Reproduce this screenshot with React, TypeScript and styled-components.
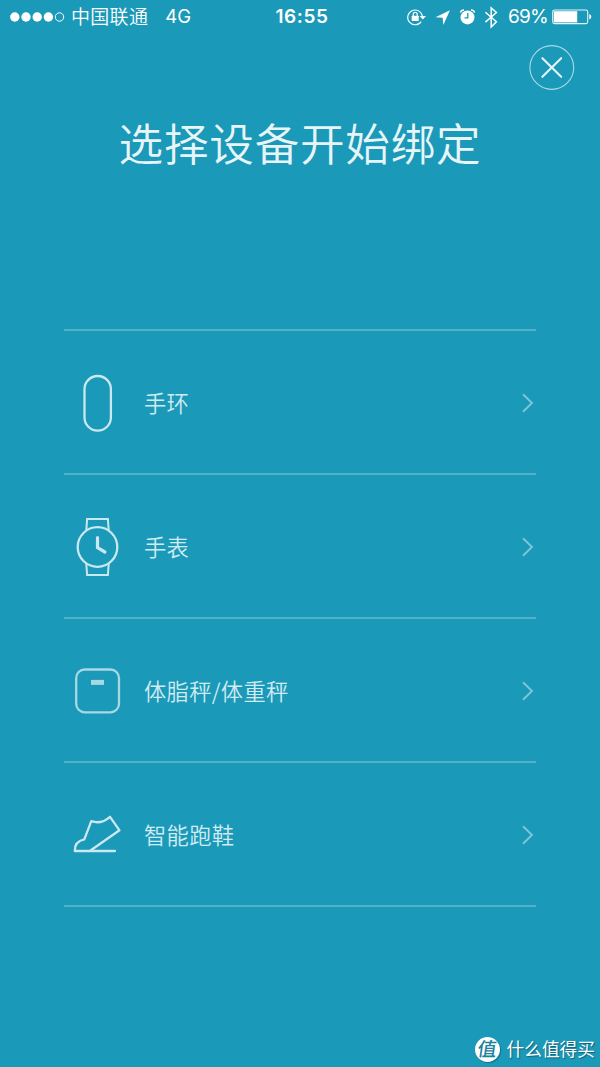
import React from 'react';
import styled, { createGlobalStyle } from 'styled-components';

const GlobalStyle = createGlobalStyle`
  * { box-sizing: border-box; }
  body { margin: 0; background: #1a99b9; }
`;

const Screen = styled.main`
  width: 600px;
  height: 1067px;
  display: flex;
  flex-direction: column;
  overflow: hidden;
  background: #1a99b9;
  color: #fff;
  font-family: Inter, 'Noto Sans CJK SC', sans-serif;
`;

const StatusBar = styled.header`
  height: 33px;
  display: grid;
  grid-template-columns: 1fr auto 1fr;
  align-items: center;
  padding: 0 8px 0 10px;
  font-size: 19px;
  line-height: 33px;
`;

const StatusGroup = styled.div<{ $end?: boolean }>`
  display: flex;
  align-items: center;
  justify-content: ${(p) => (p.$end ? 'flex-end' : 'flex-start')};
  white-space: nowrap;
  svg { display: block; flex: none; }
`;

const Carrier = styled.span`
  margin: -2px 0 0 6px;
  font-family: 'Noto Sans CJK SC', sans-serif;
  font-weight: 350;
  font-size: 19px;
  letter-spacing: 0.3px;
`;

const Network = styled.span`
  margin-left: 17px;
  font-size: 18.5px;
  font-weight: 400;
`;

const Clock = styled.time`
  padding-left: 2px;
  font-size: 19px;
  font-weight: 600;
  letter-spacing: 0.6px;
`;

const Percent = styled.span`
  margin: 0 4px 0 10px;
  font-size: 19px;
  font-weight: 400;
  letter-spacing: -0.7px;
`;

const TopActions = styled.div`
  display: flex;
  justify-content: flex-end;
  padding: 11px 25px 0 0;
`;

const CloseButton = styled.button`
  width: 46px;
  height: 46px;
  padding: 0;
  border: 0;
  background: none;
  color: #e8f5f8;
  svg { display: block; }
`;

const Title = styled.h1`
  margin: 19px 0 0;
  height: 66px;
  text-align: center;
  font-family: 'Noto Sans CJK SC', sans-serif;
  font-size: 44.6px;
  line-height: 66px;
  font-weight: 350;
  letter-spacing: 0.75px;
  color: #e8f5f8;
`;

const DeviceList = styled.ul`
  list-style: none;
  margin: 154px 64px 0;
  padding: 0;
  border-top: 2px solid #52b2ca;
`;

const DeviceRow = styled.li`
  height: 144px;
  display: flex;
  align-items: center;
  border-bottom: 2px solid #52b2ca;
  padding: 2px 1px 0 8px;
  svg { display: block; flex: none; }
`;

const DeviceName = styled.span`
  flex: 1;
  margin: -2px 0 0 22px;
  font-family: 'Noto Sans CJK SC', sans-serif;
  font-size: 22.3px;
  line-height: 32px;
  font-weight: 350;
  letter-spacing: 0.3px;
  color: #d1ebf1;
`;

const Watermark = styled.footer`
  margin-top: auto;
  display: flex;
  align-items: center;
  justify-content: flex-end;
  gap: 7px;
  padding: 0 5px 5px 0;
  font-family: 'Noto Sans CJK SC', sans-serif;
  font-size: 17.7px;
  line-height: 26px;
  font-weight: 400;
  text-shadow: 1px 1px 1px rgba(0, 55, 75, 0.55);
`;

const WatermarkText = styled.span`
  margin-top: -3px;
`;

const Seal = styled.span`
  width: 25px;
  height: 25px;
  border-radius: 50%;
  background: #fff;
  color: #1b819d;
  font-size: 19px;
  font-weight: 500;
  line-height: 22px;
  text-align: center;
  text-shadow: none;
  box-shadow: 1px 1px 1px rgba(0, 55, 75, 0.4);
`;

const SealGlyph = styled.span`
  display: block;
  transform: skewX(-8deg);
`;

const Signal = () => (
  <svg width="55" height="12" viewBox="0 0 55 12">
    {[4.8, 16, 27.2, 38.4].map((x) => (
      <circle key={x} cx={x} cy="6" r="4.7" fill="#fff" />
    ))}
    <circle cx="49.5" cy="6" r="4.2" fill="none" stroke="#fff" strokeWidth="1" />
  </svg>
);

const StatusIcons = () => (
  <svg width="92" height="24" viewBox="406 4 92 24" fill="none" stroke="#fff">
    <path d="M421.2 20.6A7.4 7.4 0 1 1 422.4 15.2" strokeWidth="1.1" />
    <path d="M419.6 15h6.4l-3.2 3.4z" fill="#fff" stroke="none" />
    <rect x="411.7" y="14.8" width="7" height="5.2" rx=".5" fill="#fff" stroke="none" />
    <path d="M413.2 15v-1.7a2 2 0 0 1 4 0V15" strokeWidth="1.2" />
    <path d="M450 9.2 443.3 24l-.6-7.2-7.2-.5z" fill="#fff" stroke="none" />
    <circle cx="467.5" cy="16.4" r="7" fill="#fff" stroke="none" />
    <path d="M460.5 11.6q.3-2.6 3.5-2.6M474.5 11.6q-.3-2.6-3.5-2.6" strokeWidth="1.3" />
    <path d="M467.8 12v4.8h-3.3" stroke="#1a99b9" strokeWidth="1.3" />
    <path d="m485.4 11.2 11 9.6-5.2 5.2V7l5.2 4.5-11 9.6" strokeWidth="1.5" />
  </svg>
);

const Battery = () => (
  <svg width="40" height="18" viewBox="0 0 40 18">
    <rect x=".7" y="2" width="35" height="13.6" rx="1.8" fill="none" stroke="#e5f4f7" strokeWidth="1.1" />
    <rect x="1.8" y="3.2" width="23.4" height="11.2" fill="#fff" />
    <path d="M37.3 6q2 .7 2 2.8t-2 2.8z" fill="#fff" />
  </svg>
);

const CloseIcon = () => (
  <svg width="46" height="46" viewBox="0 0 46 46" fill="none" stroke="currentColor">
    <circle cx="22.8" cy="23.5" r="21.9" strokeWidth="1.1" opacity=".7" />
    <path d="m13.4 14.2 18.8 18.6M32.2 14.2 13.4 32.8" strokeWidth="2.1" strokeLinecap="round" />
  </svg>
);

const BandIcon = () => (
  <rect x="20.5" y="4" width="26.4" height="54.6" rx="13.2" />
);

const WatchIcon = () => (
  <>
    <circle cx="33.5" cy="31" r="19.8" />
    <path d="m22.3 14.2.8-11.2h20.8l.8 11.2M22.3 47.8l.8 11.2h20.8l.8-11.2" strokeWidth="2" />
    <path d="M33.5 21.7v9.9l7.4 4.4" strokeWidth="3.2" strokeLinecap="round" />
  </>
);

const ScaleIcon = () => (
  <g stroke="#a8d8e4">
    <rect x="12.2" y="9.5" width="42.8" height="42.8" rx="8.5" />
    <path d="M27 22.4h13" strokeWidth="5" />
  </g>
);

const ShoeIcon = () => (
  <path
    d="M51 47H10.8q-.4-9.5 9.5-11.6l7-18.2q10 3.5 18.7-4.4l9.5 13.5L26.5 46.5"
    strokeLinejoin="round"
    strokeLinecap="round"
  />
);

const Chevron = () => (
  <svg width="14" height="20" viewBox="0 0 14 20" fill="none" stroke="#7fc5d8" strokeWidth="1.9">
    <path d="m2 1.3 9 8.7-9 8.7" />
  </svg>
);

const devices = [
  { name: '手环', icon: <BandIcon /> },
  { name: '手表', icon: <WatchIcon /> },
  { name: '体脂秤/体重秤', icon: <ScaleIcon /> },
  { name: '智能跑鞋', icon: <ShoeIcon /> },
];

const DeviceIcon = ({ children }: { children: React.ReactNode }) => (
  <svg width="50" height="62" viewBox="8 0 50 62" fill="none" stroke="#cae8ef" strokeWidth="2.3">
    {children}
  </svg>
);

export default function App() {
  return (
    <Screen>
      <GlobalStyle />
      <StatusBar>
        <StatusGroup>
          <Signal />
          <Carrier>中国联通</Carrier>
          <Network>4G</Network>
        </StatusGroup>
        <Clock>16:55</Clock>
        <StatusGroup $end>
          <StatusIcons />
          <Percent>69%</Percent>
          <Battery />
        </StatusGroup>
      </StatusBar>
      <TopActions>
        <CloseButton aria-label="关闭">
          <CloseIcon />
        </CloseButton>
      </TopActions>
      <Title>选择设备开始绑定</Title>
      <DeviceList>
        {devices.map((device) => (
          <DeviceRow key={device.name}>
            <DeviceIcon>{device.icon}</DeviceIcon>
            <DeviceName>{device.name}</DeviceName>
            <Chevron />
          </DeviceRow>
        ))}
      </DeviceList>
      <Watermark>
        <Seal>
          <SealGlyph>值</SealGlyph>
        </Seal>
        <WatermarkText>什么值得买</WatermarkText>
      </Watermark>
    </Screen>
  );
}
